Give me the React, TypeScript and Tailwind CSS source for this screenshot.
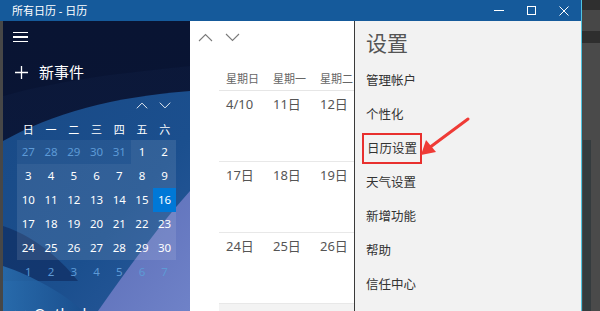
import React from "react";

const F = { fontFamily: '"Segoe UI","Noto Sans","Noto Sans CJK SC",sans-serif' };

const weekdays = ["日", "一", "二", "三", "四", "五", "六"];
type Cell = { d: number; kind: "prev" | "cur" | "next" };
const cells: Cell[] = [];
[27, 28, 29, 30, 31].forEach((d) => cells.push({ d, kind: "prev" }));
for (let d = 1; d <= 30; d++) cells.push({ d, kind: "cur" });
for (let d = 1; d <= 7; d++) cells.push({ d, kind: "next" });

const settings = ["管理帐户", "个性化", "日历设置", "天气设置", "新增功能", "帮助", "信任中心"];

function Chevron({ up, className }: { up?: boolean; className?: string }) {
  return (
    <svg width="15" height="9" viewBox="0 0 15 9" className={className}>
      <path d={up ? "M1 8 L7.5 1.5 L14 8" : "M1 1 L7.5 7.5 L14 1"} fill="none" stroke="currentColor" strokeWidth="1.1" />
    </svg>
  );
}

export default function App() {
  return (
    <div className="w-[600px] h-[311px] overflow-hidden flex bg-[#3f3f3f]" style={F}>
      {/* window */}
      <div className="w-[582px] h-full flex flex-col border-r border-[#4fc3e0]">
        {/* title bar */}
        <div className="h-[21px] bg-[#155a9b] flex items-center text-white shrink-0">
          <span className="ml-[12px] text-[11px] leading-none">所有日历 - 日历</span>
          <div className="ml-auto flex items-center h-full">
            <div className="w-[32px] flex justify-center">
              <div className="w-[10px] h-px bg-white" />
            </div>
            <div className="w-[32px] flex justify-center">
              <div className="w-[9px] h-[9px] border border-white" />
            </div>
            <div className="w-[34px] flex justify-center">
              <svg width="10" height="10" viewBox="0 0 10 10">
                <path d="M0.5 0.5 L9.5 9.5 M9.5 0.5 L0.5 9.5" stroke="white" strokeWidth="1" />
              </svg>
            </div>
          </div>
        </div>
        {/* body */}
        <div className="flex-1 flex min-h-0">
          <div className="w-[3px] bg-[#474747]" />
          {/* sidebar */}
          <div className="w-[187px] relative overflow-hidden text-white">
            <svg className="absolute inset-0" width="187" height="290" viewBox="0 0 187 290" preserveAspectRatio="none">
              <defs>
                <linearGradient id="g1" x1="0" y1="0" x2="0" y2="1">
                  <stop offset="0" stopColor="#0c1838" />
                  <stop offset="1" stopColor="#0a1a40" />
                </linearGradient>
                <linearGradient id="g2" x1="0" y1="0" x2="1" y2="1">
                  <stop offset="0" stopColor="#194a86" />
                  <stop offset="0.6" stopColor="#1b4f8e" />
                  <stop offset="1" stopColor="#2a5a9c" />
                </linearGradient>
                <linearGradient id="g3" x1="0" y1="0" x2="1" y2="1">
                  <stop offset="0" stopColor="#5a6cb6" />
                  <stop offset="1" stopColor="#6f82c8" />
                </linearGradient>
                <linearGradient id="g4" x1="0" y1="0" x2="1" y2="0">
                  <stop offset="0" stopColor="#2a6fb0" />
                  <stop offset="1" stopColor="#1a4f8e" />
                </linearGradient>
              </defs>
              <rect width="187" height="290" fill="url(#g1)" />
              <path d="M0 120 C50 92 110 76 187 70 L187 290 L0 290 Z" fill="url(#g2)" />
              <path d="M0 205 C30 215 55 235 75 260 L0 260 Z" fill="#102e62" opacity="0.7" />
              <path d="M0 245 C30 255 60 272 80 290 L0 290 Z" fill="url(#g4)" opacity="0.85" />
              <path d="M95 290 C130 240 160 200 187 170 L187 290 Z" fill="url(#g3)" />
              <path d="M0 0 L187 0 L187 45 C120 52 60 58 0 75 Z" fill="#081330" opacity="0.6" />
            </svg>
            <div className="relative flex flex-col">
              <div className="h-[32px] flex items-center pl-[10px]">
                <div className="flex flex-col gap-[3px]">
                  <div className="w-[15px] h-[1.5px] bg-white" />
                  <div className="w-[15px] h-[1.5px] bg-white" />
                  <div className="w-[15px] h-[1.5px] bg-white" />
                </div>
              </div>
              <div className="h-[38px] flex items-center pl-[12px]">
                <svg width="13" height="13" viewBox="0 0 13 13">
                  <path d="M6.5 0 V13 M0 6.5 H13" stroke="white" strokeWidth="1.3" />
                </svg>
                <span className="ml-[11px] text-[15px] leading-none">新事件</span>
              </div>
              <div className="ml-[14px] w-[159px] grid grid-cols-7 h-[28px] items-center">
                <div className="col-start-6 flex justify-center text-white">
                  <Chevron up className="w-[12px]" />
                </div>
                <div className="flex justify-center text-white">
                  <Chevron className="w-[12px]" />
                </div>
              </div>
              <div className="ml-[14px] w-[159px] grid grid-cols-7 h-[21px] items-center text-[11px]">
                {weekdays.map((w) => (
                  <div key={w} className="text-center" style={{ fontFamily: '"Noto Sans CJK SC",sans-serif' }}>
                    {w}
                  </div>
                ))}
              </div>
              <div className="ml-[14px] w-[159px] grid grid-cols-7 text-[11.5px]">
                {cells.map((c, i) => {
                  const sel = c.kind === "cur" && c.d === 16;
                  const bg = sel
                    ? "bg-[#0078d7]"
                    : c.kind === "cur"
                    ? "bg-white/10"
                    : c.kind === "prev"
                    ? "bg-white/5"
                    : "";
                  const col = c.kind === "cur" ? "text-white" : "text-[#5d9ad6]";
                  return (
                    <div key={i} className={`h-[24px] flex items-center justify-center ${bg} ${col}`}>
                      {c.d}
                    </div>
                  );
                })}
              </div>
              <div className="h-[21px]" />
              <div className="flex items-center pl-[12px] h-[16px]">
                <Chevron className="w-[11px] text-white" />
                <span className="ml-[8px] text-[15px] leading-none">Outlook</span>
              </div>
            </div>
          </div>
          {/* main */}
          <div className="w-[164px] bg-white flex flex-col text-[#666] overflow-hidden">
            <div className="h-[32px] flex items-center pl-[8px] gap-[12px] text-[#7a7a7a] shrink-0">
              <Chevron up />
              <Chevron />
            </div>
            <div className="ml-[29px] w-[141px] flex flex-col">
              <div className="h-[38px] flex items-end pb-[4px] border-b border-[#e6e6e6] text-[11px] whitespace-nowrap" style={{ fontFamily: '"Noto Sans CJK SC",sans-serif' }}>
                <div className="w-[47px] pl-[7px] shrink-0">星期日</div>
                <div className="w-[47px] pl-[7px] shrink-0">星期一</div>
                <div className="w-[47px] pl-[7px] shrink-0">星期二</div>
              </div>
              {[
                ["4/10", "11日", "12日"],
                ["17日", "18日", "19日"],
                ["24日", "25日", "26日"],
              ].map((row, i) => (
                <div key={i} className="h-[71px] border-b border-[#e8e8e8] flex text-[13px] text-[#555] pt-[3px] whitespace-nowrap">
                  {row.map((d) => (
                    <div key={d} className="w-[47px] pl-[7px] shrink-0 leading-[20px]">
                      {d}
                    </div>
                  ))}
                </div>
              ))}
              <div className="h-[20px] bg-[#f3f3f3]" />
            </div>
          </div>
          <div className="w-px bg-[#3a3a3a]" />
          {/* settings */}
          <div className="flex-1 bg-[#f2f2f2] relative pl-[11px]" style={{ fontFamily: '"Noto Sans CJK SC",sans-serif' }}>
            <div className="h-[42px] flex items-center text-[21px] text-[#555] leading-none pt-[1px]">设置</div>
            <div className="flex flex-col">
              {settings.map((s) => (
                <div key={s} className="h-[34px] flex items-center text-[12.5px] text-[#333]">
                  {s === "日历设置" ? (
                    <span className="-ml-[4px] px-[3px] h-[31px] flex items-center border-2 border-[#e8302e]">{s}</span>
                  ) : (
                    s
                  )}
                </div>
              ))}
            </div>
            <svg className="absolute left-0 top-0" width="226" height="200" viewBox="355 0 226 200">
              <path d="M468 98 L429 127" stroke="#ef3b36" strokeWidth="3" strokeLinecap="round" />
              <path d="M421 134 L426 119 L436 131 Z" fill="#ef3b36" />
            </svg>
          </div>
        </div>
      </div>
      {/* outside */}
      <div className="flex-1 flex flex-col">
        <div className="h-[10px] bg-[#2f2f2f]" />
        <div className="h-[21px] bg-[#474747]" />
        <div className="h-[12px] bg-[#2e2e2e]" />
        <div className="h-[97px] bg-[#4a4a4a]" />
        <div className="flex-1 flex bg-[#4a4a4a]">
          <div className="w-[8px] ml-[1px] bg-[#343b3e]" />
        </div>
      </div>
    </div>
  );
}
